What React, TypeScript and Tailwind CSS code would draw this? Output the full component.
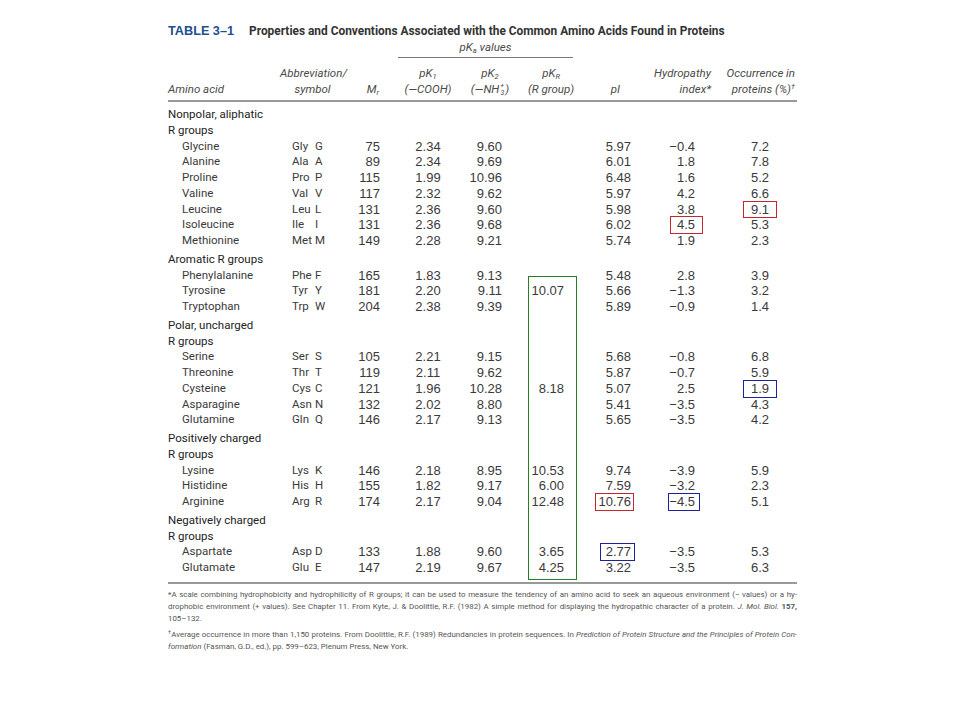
import React from "react";

type Mark = { cls: string };

type Row = {
  name: string;
  abbr: string;
  sym: string;
  mr: string;
  pk1: string;
  pk2: string;
  pkr?: string;
  pi: string;
  hydro: string;
  occ: string;
  piMark?: Mark;
  hydroMark?: Mark;
  occMark?: Mark;
};

const RED = "border-[#c3262d]";
const BLUE = "border-[#20209a]";

const groups: { title: string[]; rows: Row[] }[] = [
  {
    title: ["Nonpolar, aliphatic", "R groups"],
    rows: [
      { name: "Glycine", abbr: "Gly", sym: "G", mr: "75", pk1: "2.34", pk2: "9.60", pi: "5.97", hydro: "−0.4", occ: "7.2" },
      { name: "Alanine", abbr: "Ala", sym: "A", mr: "89", pk1: "2.34", pk2: "9.69", pi: "6.01", hydro: "1.8", occ: "7.8" },
      { name: "Proline", abbr: "Pro", sym: "P", mr: "115", pk1: "1.99", pk2: "10.96", pi: "6.48", hydro: "1.6", occ: "5.2" },
      { name: "Valine", abbr: "Val", sym: "V", mr: "117", pk1: "2.32", pk2: "9.62", pi: "5.97", hydro: "4.2", occ: "6.6" },
      { name: "Leucine", abbr: "Leu", sym: "L", mr: "131", pk1: "2.36", pk2: "9.60", pi: "5.98", hydro: "3.8", occ: "9.1", occMark: { cls: `${RED} -left-[8px] -right-[8px]` } },
      { name: "Isoleucine", abbr: "Ile", sym: "I", mr: "131", pk1: "2.36", pk2: "9.68", pi: "6.02", hydro: "4.5", occ: "5.3", hydroMark: { cls: `${RED} -left-[7px] -right-[8px]` } },
      { name: "Methionine", abbr: "Met", sym: "M", mr: "149", pk1: "2.28", pk2: "9.21", pi: "5.74", hydro: "1.9", occ: "2.3" },
    ],
  },
  {
    title: ["Aromatic R groups"],
    rows: [
      { name: "Phenylalanine", abbr: "Phe", sym: "F", mr: "165", pk1: "1.83", pk2: "9.13", pi: "5.48", hydro: "2.8", occ: "3.9" },
      { name: "Tyrosine", abbr: "Tyr", sym: "Y", mr: "181", pk1: "2.20", pk2: "9.11", pkr: "10.07", pi: "5.66", hydro: "−1.3", occ: "3.2" },
      { name: "Tryptophan", abbr: "Trp", sym: "W", mr: "204", pk1: "2.38", pk2: "9.39", pi: "5.89", hydro: "−0.9", occ: "1.4" },
    ],
  },
  {
    title: ["Polar, uncharged", "R groups"],
    rows: [
      { name: "Serine", abbr: "Ser", sym: "S", mr: "105", pk1: "2.21", pk2: "9.15", pi: "5.68", hydro: "−0.8", occ: "6.8" },
      { name: "Threonine", abbr: "Thr", sym: "T", mr: "119", pk1: "2.11", pk2: "9.62", pi: "5.87", hydro: "−0.7", occ: "5.9" },
      { name: "Cysteine", abbr: "Cys", sym: "C", mr: "121", pk1: "1.96", pk2: "10.28", pkr: "8.18", pi: "5.07", hydro: "2.5", occ: "1.9", occMark: { cls: `${BLUE} -left-[8px] -right-[8px]` } },
      { name: "Asparagine", abbr: "Asn", sym: "N", mr: "132", pk1: "2.02", pk2: "8.80", pi: "5.41", hydro: "−3.5", occ: "4.3" },
      { name: "Glutamine", abbr: "Gln", sym: "Q", mr: "146", pk1: "2.17", pk2: "9.13", pi: "5.65", hydro: "−3.5", occ: "4.2" },
    ],
  },
  {
    title: ["Positively charged", "R groups"],
    rows: [
      { name: "Lysine", abbr: "Lys", sym: "K", mr: "146", pk1: "2.18", pk2: "8.95", pkr: "10.53", pi: "9.74", hydro: "−3.9", occ: "5.9" },
      { name: "Histidine", abbr: "His", sym: "H", mr: "155", pk1: "1.82", pk2: "9.17", pkr: "6.00", pi: "7.59", hydro: "−3.2", occ: "2.3" },
      { name: "Arginine", abbr: "Arg", sym: "R", mr: "174", pk1: "2.17", pk2: "9.04", pkr: "12.48", pi: "10.76", hydro: "−4.5", occ: "5.1", piMark: { cls: `${RED} -left-[3px] -right-[3px]` }, hydroMark: { cls: `${BLUE} -left-[1px] -right-[5px]` } },
    ],
  },
  {
    title: ["Negatively charged", "R groups"],
    rows: [
      { name: "Aspartate", abbr: "Asp", sym: "D", mr: "133", pk1: "1.88", pk2: "9.60", pkr: "3.65", pi: "2.77", hydro: "−3.5", occ: "5.3", piMark: { cls: `${BLUE} -left-[6px] -right-[4px]` } },
      { name: "Glutamate", abbr: "Glu", sym: "E", mr: "147", pk1: "2.19", pk2: "9.67", pkr: "4.25", pi: "3.22", hydro: "−3.5", occ: "6.3" },
    ],
  },
];

const COLS = "grid grid-cols-[112px_65px_48px_70px_54px_68px_55px_85px_72px]";
const SANS = "font-['Roboto','Liberation_Sans',sans-serif]";
const NUM = "font-['Liberation_Sans',Arial,sans-serif] text-[13px]";

function Val({ v, mark }: { v?: string; mark?: Mark }) {
  if (!v) return null;
  if (!mark) return <>{v}</>;
  return (
    <span className="relative inline-block">
      {v}
      <span className={`absolute -top-[1px] -bottom-[1px] border ${mark.cls}`} />
    </span>
  );
}

function DataRow({ r }: { r: Row }) {
  return (
    <div className={`${COLS} h-[15.75px] leading-[15.75px] text-[#3a3a3a]`}>
      <div className={`${SANS} whitespace-nowrap pl-[14px] text-[11.5px]`}>{r.name}</div>
      <div className={`${SANS} whitespace-nowrap pl-[12px] text-[11.5px]`}>
        <span className="inline-block w-[23px]">{r.abbr}</span>
        {r.sym}
      </div>
      <div className={`${NUM} pr-[13px] text-right`}>{r.mr}</div>
      <div className={`${NUM} text-center`}>{r.pk1}</div>
      <div className={`${NUM} pr-[15px] text-right`}>{r.pk2}</div>
      <div className={`${NUM} pr-[21px] text-right`}>{r.pkr}</div>
      <div className={`${NUM} pr-[9px] text-right`}>
        <Val v={r.pi} mark={r.piMark} />
      </div>
      <div className={`${NUM} pr-[30px] text-right`}>
        <Val v={r.hydro} mark={r.hydroMark} />
      </div>
      <div className={`${NUM} pr-[28px] text-right`}>
        <Val v={r.occ} mark={r.occMark} />
      </div>
    </div>
  );
}

function PK({ sub }: { sub: React.ReactNode }) {
  return (
    <>
      pK<sub className="text-[7.5px]">{sub}</sub>
    </>
  );
}

export default function App() {
  return (
    <div className="relative h-[720px] w-[960px] bg-white">
      <div className="ml-[168px] w-[629px] pt-[23px]">
        {/* title */}
        <div className="flex h-[16px] items-center whitespace-nowrap leading-[16px]">
          <span className="mr-[15px] shrink-0 font-['Liberation_Sans',Arial,sans-serif] text-[12.7px] font-bold text-[#1d4f91]">
            TABLE 3–1
          </span>
          <span className={`${SANS} text-[11.9px] font-bold text-[#333]`}>
            Properties and Conventions Associated with the Common Amino Acids Found in Proteins
          </span>
        </div>

        {/* header */}
        <div className={`${SANS} whitespace-nowrap text-[11.5px] italic text-[#4a4a4a]`}>
          <div className={`${COLS} h-[19px] leading-[16px]`}>
            <div className="col-span-3 col-start-4 ml-[5px] mr-[12px] h-[19px] border-b border-[#777] pb-[3px] text-center">
              <PK sub="a" /> values
            </div>
          </div>
          <div className={`${COLS} mt-[7px] border-b-2 border-[#999] pb-[3px] leading-[16px]`}>
            <div className="flex flex-col">
              <span className="h-[16px]" />
              <span>Amino acid</span>
            </div>
            <div className="flex flex-col text-center">
              <span>Abbreviation/</span>
              <span>symbol</span>
            </div>
            <div className="flex flex-col pr-[14px] text-right">
              <span className="h-[16px]" />
              <span>
                M<sub className="text-[7.5px]">r</sub>
              </span>
            </div>
            <div className="flex flex-col text-center">
              <span>
                <PK sub="1" />
              </span>
              <span>(—COOH)</span>
            </div>
            <div className="flex flex-col text-center">
              <span>
                <PK sub="2" />
              </span>
              <span>
                (—NH
                <span className="relative inline-flex w-[6px] flex-col align-middle text-[7px] leading-[7px]">
                  <span>+</span>
                  <span>3</span>
                </span>
                )
              </span>
            </div>
            <div className="flex flex-col text-center">
              <span>
                <PK sub="R" />
              </span>
              <span>(R group)</span>
            </div>
            <div className="flex flex-col pr-[20px] text-right">
              <span className="h-[16px]" />
              <span>pI</span>
            </div>
            <div className="flex flex-col pr-[14px] text-right">
              <span>Hydropathy</span>
              <span>index*</span>
            </div>
            <div className="flex flex-col pr-[2px] text-right">
              <span>Occurrence in</span>
              <span>
                proteins (%)<sup className="text-[7.5px]">†</sup>
              </span>
            </div>
          </div>
        </div>

        {/* body */}
        <div className="border-b-2 border-[#999] pb-[6px]">
          {groups.map((g, gi) => (
            <div key={gi} className={gi === 0 ? "pt-[5px]" : "pt-[3px]"}>
              {g.title.map((t) => (
                <div key={t} className={`${SANS} h-[15.75px] text-[11.5px] leading-[15.75px] text-[#222]`}>
                  {t}
                </div>
              ))}
              {g.rows.map((r) => (
                <DataRow key={r.name} r={r} />
              ))}
            </div>
          ))}
        </div>

        {/* footnotes */}
        <div className={`${SANS} mt-[5px] text-[7.9px] leading-[12px] text-[#555]`}>
          <div className="text-justify [text-align-last:justify]">
            *A scale combining hydrophobicity and hydrophilicity of R groups; it can be used to measure the tendency of an amino acid to seek an aqueous environment (− values) or a hy-
          </div>
          <div className="text-justify [text-align-last:justify]">
            drophobic environment (+ values). See Chapter 11. From Kyte, J. &amp; Doolittle, R.F. (1982) A simple method for displaying the hydropathic character of a protein.{" "}
            <i>J. Mol. Biol.</i> <b>157,</b>
          </div>
          <div>105–132.</div>
          <div className="mt-[4px] text-justify [text-align-last:justify]">
            <sup className="text-[5.5px]">†</sup>Average occurrence in more than 1,150 proteins. From Doolittle, R.F. (1989) Redundancies in protein sequences. In{" "}
            <i>Prediction of Protein Structure and the Principles of Protein Con-</i>
          </div>
          <div>
            <i>formation</i> (Fasman, G.D., ed.), pp. 599–623, Plenum Press, New York.
          </div>
        </div>
      </div>

      {/* pKR highlight */}
      <div className="absolute left-[528px] top-[276px] h-[304px] w-[49px] border border-[#238023]" />
    </div>
  );
}
